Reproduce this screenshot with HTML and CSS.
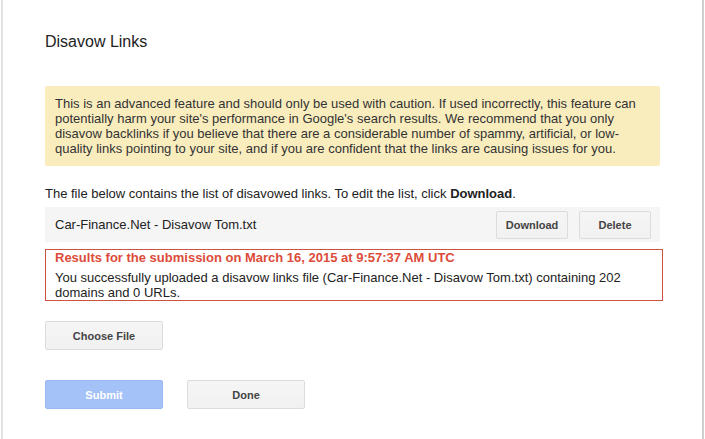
FILE: index.html
```html
<!DOCTYPE html>
<html lang="en">

<head>
    <meta charset="UTF-8">
    <meta name="viewport" content="width=device-width, initial-scale=1.0">
    <title>Disavow Links</title>
    <link rel="stylesheet" href="styles.css">
</head>

<body>
    <div class="dialog">
        <div class="content">
            <h1 class="title">Disavow Links</h1>

            <div class="warning">
                This is an advanced feature and should only be used with caution. If used incorrectly, this feature can
                potentially harm your site's performance in Google's search results. We recommend that you only
                disavow backlinks if you believe that there are a considerable number of spammy, artificial, or low-quality
                links pointing to your site, and if you are confident that the links are causing issues for you.
            </div>

            <p class="intro">The file below contains the list of disavowed links. To edit the list, click <b>Download</b>.</p>

            <div class="file-row">
                <span class="file-name">Car-Finance.Net - Disavow Tom.txt</span>
                <div class="file-actions">
                    <button type="button" class="butn small">Download</button>
                    <button type="button" class="butn small">Delete</button>
                </div>
            </div>

            <div class="result">
                <p class="result-title">Results for the submission on March 16, 2015 at 9:57:37 AM UTC</p>
                <p class="result-text">You successfully uploaded a disavow links file (Car-Finance.Net - Disavow Tom.txt) containing 202 domains and 0 URLs.</p>
            </div>

            <div class="choose">
                <button type="button" class="butn wide">Choose File</button>
            </div>

            <div class="actions">
                <button type="button" class="butn wide primary" disabled>Submit</button>
                <button type="button" class="butn wide">Done</button>
            </div>
        </div>
    </div>
</body>

</html>
```

FILE: styles.css
```css
        body {
            margin: 0;
            background-color: #fff;
            font-family: "Liberation Sans", Arial, sans-serif;
            font-size: 13px;
            color: #222;
        }

        .dialog {
            box-sizing: border-box;
            width: 703px;
            min-height: 100vh;
            margin-left: 1px;
            border-left: 2px solid #e2e2e2;
            border-right: 2px solid #cfcfcf;
            padding: 32px 0 0 42px;
        }

        .content {
            width: 615px;
        }

        .title {
            margin: 0;
            font-size: 16px;
            font-weight: normal;
            line-height: 20px;
            color: #222;
        }

        .warning {
            margin-top: 34px;
            padding: 10px;
            background-color: #f9edbe;
            line-height: 15px;
            color: #333;
            border-radius: 2px;
        }

        .intro {
            margin: 20px 0 0;
            line-height: 15px;
        }

        .file-row {
            display: flex;
            align-items: center;
            justify-content: space-between;
            height: 35px;
            margin-top: 6px;
            padding: 0 9px 0 10px;
            background-color: #f5f5f5;
        }

        .file-actions {
            display: flex;
            gap: 11px;
            padding-top: 1px;
        }

        .result {
            margin: 7px -3px 0 0;
            padding: 0 9px;
            border: 1px solid #cc5244;
        }

        .result p {
            margin: 0;
            line-height: 15px;
        }

        .result-title {
            margin-bottom: 5px !important;
            font-weight: bold;
            color: #dd4b39;
        }

        .choose {
            margin-top: 20px;
        }

        .actions {
            display: flex;
            gap: 24px;
            margin-top: 30px;
        }

        .butn {
            box-sizing: border-box;
            height: 29px;
            padding: 0 8px;
            font-family: "Liberation Sans", Arial, sans-serif;
            font-size: 11px;
            font-weight: bold;
            color: #444;
            background-color: #f5f5f5;
            background-image: linear-gradient(#f5f5f5, #f1f1f1);
            border: 1px solid #dcdcdc;
            border-radius: 2px;
        }

        .butn.small {
            width: 72px;
            height: 28px;
        }

        .butn.wide {
            width: 118px;
        }

        .butn.primary {
            color: #fff;
            background-color: #a4c2f8;
            background-image: none;
            border-color: #98b9f3;
        }
```
